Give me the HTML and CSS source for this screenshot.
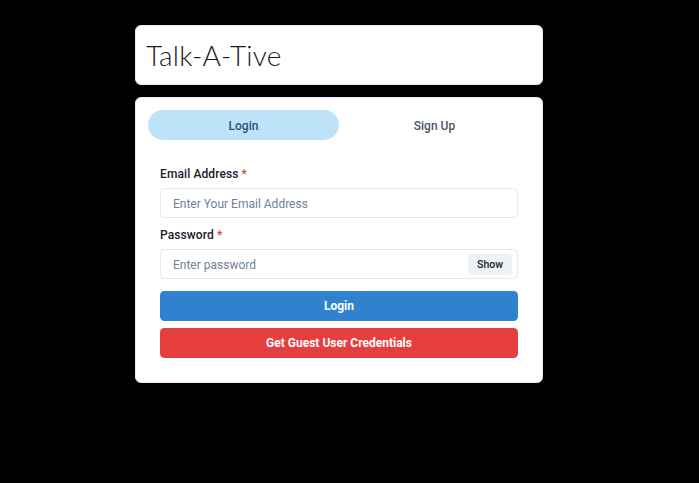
FILE: index.html
```html
<!DOCTYPE html>
<html>
<head>
<meta charset="utf-8">
<link rel="stylesheet" href="styles.css">
</head>
<body>
<div class="container">
  <div class="header-box">
    <div class="title">Talk-A-Tive</div>
  </div>
  <div class="card">
    <div class="tablist">
      <div class="tab tab-active">Login</div>
      <div class="tab">Sign Up</div>
    </div>
    <div class="panel">
      <div class="field">
        <label class="label">Email Address <span class="req">*</span></label>
        <div class="input"><span class="ph">Enter Your Email Address</span></div>
      </div>
      <div class="field">
        <label class="label">Password <span class="req">*</span></label>
        <div class="input input-group"><span class="ph">Enter password</span><span class="show">Show</span></div>
      </div>
      <div class="btn btn-blue btn-login">Login</div>
      <div class="btn btn-red">Get Guest User Credentials</div>
    </div>
  </div>
</div>
</body>
</html>
```
FILE: styles.css
```css
html, body {
  margin: 0;
  padding: 0;
  background: #000;
}
body {
  font-family: "Roboto", "Open Sans", sans-serif;
  color: #1A202C;
  height: 483px;
  overflow: hidden;
}
.container {
  width: 408px;
  margin-left: 135px;
  padding-top: 25px;
  display: flex;
  flex-direction: column;
  gap: 12px;
}
.header-box {
  background: #fff;
  border: 1px solid #E2E8F0;
  border-radius: 6px;
  padding: 9px 9px 9px 10px;
  height: 40px;
  display: flex;
  align-items: center;
}
.title {
  font-family: "Lato", sans-serif;
  font-weight: 300;
  font-size: 28px;
  letter-spacing: 0.2px;
  line-height: 40px;
  color: #1a1a1a;
}
.card {
  background: #fff;
  border: 1px solid #E2E8F0;
  border-radius: 6px;
  padding: 12px;
}
.tablist {
  display: flex;
  margin-bottom: 12px;
}
.tab {
  flex: 1;
  height: 30px;
  box-sizing: border-box;
  padding-top: 1px;
  border-radius: 999px;
  display: flex;
  align-items: center;
  justify-content: center;
  font-size: 12px;
  font-weight: 500;
  color: #4A5568;
}
.tab-active {
  background: #BEE3F8;
  color: #2C5282;
}
.panel {
  padding: 12px;
  display: flex;
  flex-direction: column;
  gap: 7px;
}
.field {
  display: flex;
  flex-direction: column;
}
.label {
  font-size: 12px;
  font-weight: 500;
  line-height: 18px;
  padding-top: 1px;
  margin-bottom: 5px;
  color: #1A202C;
  letter-spacing: 0.1px;
  -webkit-font-smoothing: antialiased;
}
.req {
  color: #E53E3E;
}
.input {
  height: 28px;
  border: 1px solid #E2E8F0;
  border-radius: 4.5px;
  padding: 0 5px 0 12px;
  display: flex;
  align-items: center;
  font-size: 12px;
}
.ph {
  color: #718096;
  flex: 1;
  padding-top: 1px;
}
.show {
  background: #EDF2F7;
  border-radius: 4px;
  height: 21px;
  padding: 0 9px;
  display: flex;
  align-items: center;
  font-size: 10.5px;
  font-weight: 500;
  color: #1A202C;
}
.btn {
  height: 30px;
  border-radius: 4.5px;
  display: flex;
  align-items: center;
  justify-content: center;
  font-size: 12px;
  font-weight: 700;
  color: #fff;
}
.btn-login {
  margin-top: 5px;
}
.btn-blue {
  background: #3182CE;
}
.btn-red {
  background: #E53E3E;
}
```
